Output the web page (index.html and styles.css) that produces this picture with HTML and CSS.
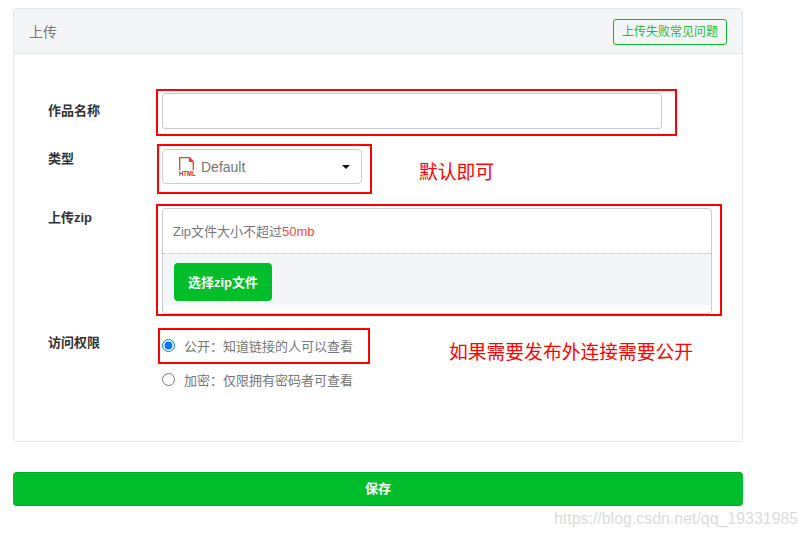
FILE: index.html
```html
<!DOCTYPE html>
<html lang="zh-CN">
<head>
    <meta charset="UTF-8">
    <meta name="viewport" content="width=device-width, initial-scale=1.0">
    <title>上传</title>
    <link rel="stylesheet" href="styles.css">
</head>
<body>
    <div class="panel">
        <div class="panel-head">
            <span class="panel-title">上传</span>
            <a class="help-link">上传失败常见问题</a>
        </div>
        <div class="panel-body">
            <div class="row row-name">
                <label class="row-label">作品名称</label>
                <input class="name-input" type="text">
            </div>
            <div class="row row-type">
                <label class="row-label">类型</label>
                <div class="type-select">
                    <svg class="html-icon" width="17" height="23" viewBox="0 0 17 23">
                        <path d="M0.7 13V0.7H10.5L14.3 4.5V13" fill="none" stroke="#e8402f" stroke-width="1.3"/>
                        <path d="M10 0.7V5H14.3Z" fill="#e8402f"/>
                        <text transform="translate(0 18.8) scale(1 1.25)" font-family="Liberation Sans" font-weight="bold" font-size="6" fill="#d9251c">HTML</text>
                    </svg>
                    <span class="type-text">Default</span>
                    <span class="caret"></span>
                </div>
            </div>
            <div class="row row-zip">
                <label class="row-label">上传zip</label>
                <div class="zip-box">
                    <div class="zip-tip">Zip文件大小不超过<span class="zip-limit">50mb</span></div>
                    <div class="zip-bar">
                        <button class="zip-btn">选择zip文件</button>
                    </div>
                </div>
            </div>
            <div class="row row-access">
                <label class="row-label">访问权限</label>
                <div class="radios">
                    <label class="radio-item"><input type="radio" name="access" checked>公开：知道链接的人可以查看</label>
                    <label class="radio-item"><input type="radio" name="access">加密：仅限拥有密码者可查看</label>
                </div>
            </div>
        </div>
    </div>

    <button class="save-btn">保存</button>

    <!-- 截图上的红色标注 -->
    <div class="mark mark-name"></div>
    <div class="mark mark-type"></div>
    <div class="mark mark-zip"></div>
    <div class="mark mark-access"></div>
    <div class="note note-type">默认即可</div>
    <div class="note note-access">如果需要发布外连接需要公开</div>
    <div class="watermark">https://blog.csdn.net/qq_19331985</div>
</body>
</html>
```

FILE: styles.css
```css
* {
    margin: 0;
    padding: 0;
    box-sizing: border-box;
}

body {
    position: relative;
    width: 807px;
    height: 537px;
    padding: 8px 0 0 13px;
    overflow: hidden;
    background: #fff;
    color: #666;
    font-family: "Liberation Sans", "Noto Sans CJK SC", sans-serif;
    font-size: 13px;
}

/* 面板 */
.panel {
    width: 730px;
    height: 434px;
    border: 1px solid #e3e5e7;
    border-radius: 4px;
}

.panel-head {
    display: flex;
    justify-content: space-between;
    align-items: center;
    height: 45px;
    padding: 0 15px;
    background: #f4f5f7;
    border-bottom: 1px solid #e3e5e7;
}

.panel-title {
    font-size: 14px;
    color: #777;
}

.help-link {
    width: 114px;
    height: 26px;
    margin-top: 1px;
    border: 1px solid #00bd2b;
    border-radius: 3px;
    color: #25b84a;
    font-size: 12px;
    line-height: 24px;
    text-align: center;
}

.panel-body {
    padding: 39px 0 0 34px;
}

.row {
    display: flex;
}

.row-label {
    width: 114px;
    flex-shrink: 0;
    margin-top: -1px;
    color: #333;
    font-weight: bold;
}

.row-name {
    align-items: center;
}

.row-name .row-label {
    margin-top: -3px;
}

.row-access .row-label {
    margin-top: -2px;
}

.name-input {
    width: 500px;
    height: 36px;
    border: 1px solid #ccc;
    border-radius: 3px;
    background: #fff;
}

/* 类型 */
.row-type {
    margin-top: 20px;
}

.type-select {
    display: flex;
    align-items: center;
    width: 200px;
    height: 35px;
    padding: 0 11px 0 16px;
    border: 1px solid #ccc;
    border-radius: 4px;
}

.html-icon {
    flex-shrink: 0;
    margin-top: 4px;
}

.type-text {
    flex: 1;
    margin-left: 5px;
    font-size: 14px;
    color: #777;
}

.caret {
    width: 0;
    height: 0;
    border-left: 4px solid transparent;
    border-right: 4px solid transparent;
    border-top: 4px solid #111;
}

/* 上传 */
.row-zip {
    margin-top: 24px;
}

.zip-box {
    width: 550px;
    height: 106px;
    border: 1px solid #ccc;
    border-radius: 4px;
}

.zip-tip {
    height: 45px;
    padding-left: 10px;
    line-height: 45px;
    color: #777;
    border-bottom: 1px dotted #bbb;
}

.zip-limit {
    color: #f04b40;
}

.zip-bar {
    height: 51px;
    padding: 9px 11px;
    background: #f4f5f7;
}

.zip-btn {
    width: 98px;
    height: 38px;
    padding-bottom: 2px;
    border: none;
    border-radius: 4px;
    background: #00bd2b;
    color: #fff;
    font-family: inherit;
    font-size: 13px;
    font-weight: bold;
}

/* 访问权限 */
.row-access {
    margin-top: 20px;
}

.radios {
    display: flex;
    flex-direction: column;
    gap: 16px;
    margin-top: 2px;
}

.radio-item {
    display: flex;
    align-items: center;
    height: 18px;
    color: #777;
}

.radio-item input {
    width: 13px;
    height: 13px;
    margin-right: 9px;
}

.save-btn {
    display: block;
    width: 730px;
    height: 34px;
    margin-top: 30px;
    padding-bottom: 3px;
    border: none;
    border-top: 1px solid #00a827;
    border-bottom: 1px solid #00a827;
    border-radius: 4px;
    background: #00bd2b;
    color: #fff;
    font-family: inherit;
    font-size: 13px;
    font-weight: bold;
}

/* 标注层 */
.mark {
    position: absolute;
    border: 2px solid #f00;
}

.mark-name { left: 156px; top: 89px; width: 521px; height: 47px; }
.mark-type { left: 157px; top: 144px; width: 215px; height: 50px; }
.mark-zip { left: 156px; top: 204px; width: 566px; height: 112px; }
.mark-access { left: 158px; top: 328px; width: 212px; height: 36px; }

.note {
    position: absolute;
    color: #f00;
    font-size: 18.8px;
    line-height: 26px;
    white-space: nowrap;
}

.note-type { left: 419px; top: 160px; }
.note-access { left: 449px; top: 340px; }

.watermark {
    position: absolute;
    left: 554px;
    top: 509px;
    color: #dcdcdc;
    font-size: 17px;
    line-height: 20px;
    white-space: nowrap;
    transform: scaleX(0.936);
    transform-origin: left center;
}
```
